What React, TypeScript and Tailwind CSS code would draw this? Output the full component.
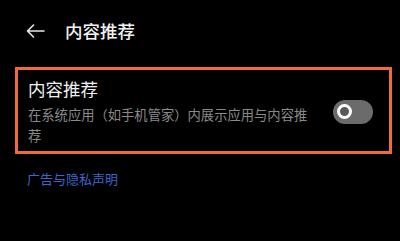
import { useState } from 'react';

const font = { fontFamily: '"Noto Sans CJK SC", "Noto Sans", sans-serif' };

function Toggle({ on, onChange }: { on: boolean; onChange: () => void }) {
  return (
    <button
      type="button"
      onClick={onChange}
      className="relative flex h-[24px] w-[40px] shrink-0 items-center rounded-full bg-[#6b6b6b] px-[4px]"
    >
      <span className={`h-[15px] w-[15px] rounded-full border-[3px] border-white bg-[#5a5a5a] ${on ? 'ml-auto' : ''}`} />
    </button>
  );
}

export default function App() {
  const [enabled, setEnabled] = useState(false);

  return (
    <div className="h-[241px] w-[400px] overflow-hidden bg-black text-white" style={font}>
      <div className="flex h-[61px] items-center pl-[26px]">
        <svg width="19" height="14" viewBox="0 0 19 14" fill="none" stroke="#e8e8e8" strokeWidth="1.6" strokeLinecap="round" strokeLinejoin="round">
          <path d="M18 7H1.5M7.5 1L1.5 7l6 6" />
        </svg>
        <h1 className="ml-[20px] text-[17.5px] leading-none font-medium text-[#f2f2f2]">内容推荐</h1>
      </div>

      <div className="mt-[6px] ml-[15px] w-[377px] border-[3px] border-[#f26a3c]">
        <div className="flex items-center pt-[7px] pb-[5px] pr-[16px] pl-[10px]">
          <div className="w-[282px]">
            <div className="text-[17.5px] leading-[24px] text-[#f0f0f0]">内容推荐</div>
            <p className="mt-[3px] text-[13.3px] leading-[21px] text-[#8a8a8a]">
              在系统应用（如手机管家）内展示应用与内容推荐
            </p>
          </div>
          <div className="ml-auto">
            <Toggle on={enabled} onChange={() => setEnabled(!enabled)} />
          </div>
        </div>
      </div>

      <a href="#" className="mt-[16px] ml-[27px] block text-[13px] leading-[18px] text-[#3d66cc]">
        广告与隐私声明
      </a>
    </div>
  );
}
